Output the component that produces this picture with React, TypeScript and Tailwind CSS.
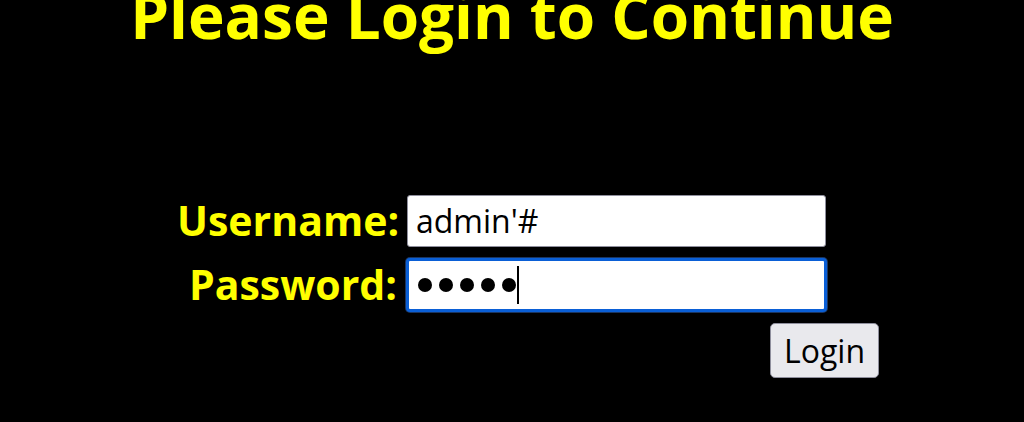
export default function App() {
  return (
    <div
      className="min-h-[422px] bg-black overflow-hidden"
      style={{ fontFamily: '"Open Sans", "Noto Sans", sans-serif' }}
    >
      <h1 className="mt-[-16px] text-center text-[62px] font-bold leading-none text-[#ffff00]">
        Please Login to Continue
      </h1>

      <div className="mt-[149px] ml-[177px] grid w-fit grid-cols-[220px_419px_43px] gap-x-[10px] gap-y-[12px]">
        <label className="self-center pb-[2px] text-right text-[41px] font-bold leading-none text-[#ffff00]">
          Username:
        </label>
        <div className="flex h-[52px] items-center rounded-[3px] border border-[#8f8f9d] bg-white px-[8px] text-[32px] text-black">
          admin'#
        </div>
        <div />

        <label className="self-center pb-[2px] text-right text-[41px] font-bold leading-none text-[#ffff00]">
          Password:
        </label>
        {/* focused field */}
        <div className="-mx-[1px] -my-[1px] flex h-[54px] items-center gap-[7px] rounded-[4px] border-[3px] border-[#0a5fd6] bg-white px-[9px] ring-1 ring-[#1b3560]">
          {[0, 1, 2, 3, 4].map((i) => (
            <span key={i} className="h-[14px] w-[14px] rounded-full bg-black" />
          ))}
          <span className="ml-[-6px] h-[38px] w-[2px] bg-black" />
        </div>
        <div />

        <div />
        <div className="col-span-2 flex justify-end">
          <button className="h-[55px] w-[109px] rounded-[5px] border border-[#8f8f9d] bg-[#e9e9ed] text-[32px] leading-none text-black">
            Login
          </button>
        </div>
      </div>
    </div>
  );
}
